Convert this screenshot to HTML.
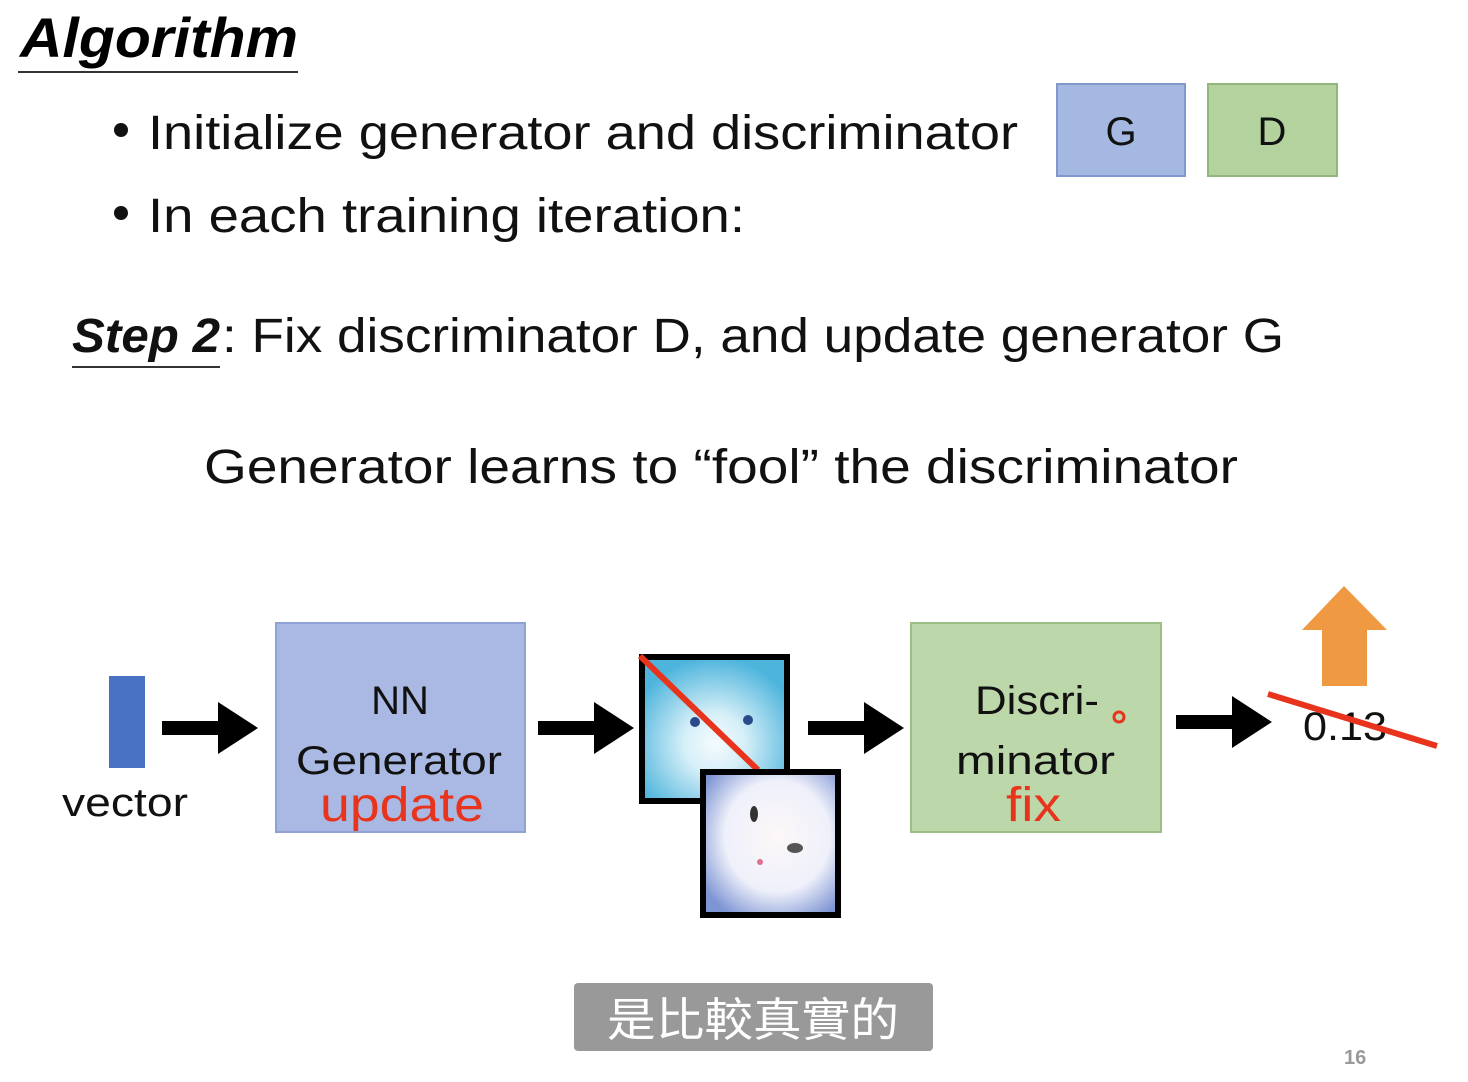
<!DOCTYPE html>
<html><head><meta charset="utf-8"><style>
html,body{margin:0;padding:0;background:#fff;}
svg{display:block;}
text{font-family:"Liberation Sans","Noto Sans CJK TC",sans-serif;}
</style></head><body>
<svg width="1468" height="1082" viewBox="0 0 1468 1082" xmlns="http://www.w3.org/2000/svg">
<defs>
<radialGradient id="g1" cx="0.5" cy="0.6" r="0.6">
<stop offset="0" stop-color="#f4fbfd"/><stop offset="0.35" stop-color="#d6eff8"/><stop offset="1" stop-color="#4db4dc"/></radialGradient>
<radialGradient id="g2" cx="0.55" cy="0.45" r="0.65">
<stop offset="0" stop-color="#fdf8f8"/><stop offset="0.6" stop-color="#eef0fa"/><stop offset="1" stop-color="#7e95d4"/></radialGradient>
</defs>
<text x="20" y="57" font-size="56" font-weight="bold" font-style="italic" textLength="278" lengthAdjust="spacingAndGlyphs">Algorithm</text>
<rect x="18" y="71" width="280" height="2" fill="#333"/>
<circle cx="121" cy="130" r="7" fill="#111"/>
<text x="148" y="149" font-size="48" fill="#111" textLength="870" lengthAdjust="spacingAndGlyphs">Initialize generator and discriminator</text>
<circle cx="121" cy="213" r="7" fill="#111"/>
<text x="148" y="232" font-size="48" fill="#111" textLength="597" lengthAdjust="spacingAndGlyphs">In each training iteration:</text>
<rect x="1057" y="84" width="128" height="92" fill="#a5b8e2" stroke="#8098cc" stroke-width="2"/>
<text x="1121" y="145" font-size="40" text-anchor="middle" fill="#111">G</text>
<rect x="1208" y="84" width="129" height="92" fill="#b3d29e" stroke="#93b67d" stroke-width="2"/>
<text x="1272" y="145" font-size="40" text-anchor="middle" fill="#111">D</text>
<text x="72" y="352" font-size="48" font-weight="bold" font-style="italic" fill="#111" textLength="148" lengthAdjust="spacingAndGlyphs">Step 2</text>
<rect x="72" y="366" width="148" height="2" fill="#333"/>
<text x="222" y="352" font-size="48" fill="#111" textLength="1062" lengthAdjust="spacingAndGlyphs">: Fix discriminator D, and update generator G</text>
<text x="204" y="483" font-size="48" fill="#111" textLength="1034" lengthAdjust="spacingAndGlyphs">Generator learns to “fool” the discriminator</text>
<rect x="109" y="676" width="36" height="92" fill="#4a72c4"/>
<text x="62" y="816" font-size="40" fill="#111" textLength="126" lengthAdjust="spacingAndGlyphs">vector</text>
<g fill="#000">
<path d="M162 721h56v-19l40 26l-40 26v-19h-56z"/>
<path d="M538 721h56v-19l40 26l-40 26v-19h-56z"/>
<path d="M808 721h56v-19l40 26l-40 26v-19h-56z"/>
<path d="M1176 715h56v-19l40 26l-40 26v-19h-56z"/>
</g>
<rect x="276" y="623" width="249" height="209" fill="#a9b9e3" stroke="#8ea3d4" stroke-width="2"/>
<text x="400" y="714" font-size="40" text-anchor="middle" fill="#111">NN</text>
<text x="296" y="774" font-size="40" fill="#111" textLength="206" lengthAdjust="spacingAndGlyphs">Generator</text>
<text x="320" y="821" font-size="48" fill="#e8341c" textLength="164" lengthAdjust="spacingAndGlyphs">update</text>
<rect x="642" y="657" width="145" height="144" fill="url(#g1)" stroke="#000" stroke-width="6"/>
<circle cx="695" cy="722" r="5" fill="#2a4a8a"/><circle cx="748" cy="720" r="5" fill="#2a4a8a"/>
<line x1="640" y1="656" x2="758" y2="770" stroke="#e8341c" stroke-width="6"/>
<rect x="703" y="772" width="135" height="143" fill="url(#g2)" stroke="#000" stroke-width="6"/>
<ellipse cx="754" cy="814" rx="4" ry="8" fill="#333"/><ellipse cx="795" cy="848" rx="8" ry="5" fill="#555"/>
<circle cx="760" cy="862" r="3" fill="#e07090"/>
<rect x="911" y="623" width="250" height="209" fill="#bcd7aa" stroke="#9bbf85" stroke-width="2"/>
<text x="975" y="714" font-size="40" fill="#111" textLength="124" lengthAdjust="spacingAndGlyphs">Discri-</text>
<text x="956" y="774" font-size="40" fill="#111" textLength="159" lengthAdjust="spacingAndGlyphs">minator</text>
<text x="1006" y="821" font-size="48" fill="#e8341c" textLength="55" lengthAdjust="spacingAndGlyphs">fix</text>
<circle cx="1119" cy="717" r="5" fill="none" stroke="#e8341c" stroke-width="3"/>
<path d="M1344 586l43 44h-20v56h-45v-56h-20z" fill="#ef9a42"/>
<text x="1303" y="740" font-size="40" fill="#111" textLength="84" lengthAdjust="spacingAndGlyphs">0.13</text>
<line x1="1268" y1="694" x2="1437" y2="746" stroke="#e8341c" stroke-width="6"/>
<rect x="574" y="983" width="359" height="68" rx="4" fill="#999"/>
<text x="753" y="1036" font-size="46" fill="#fff" text-anchor="middle" textLength="292" lengthAdjust="spacingAndGlyphs">是比較真實的</text>
<text x="1344" y="1064" font-size="20" fill="#999" font-weight="bold">16</text>
</svg>
</body></html>
